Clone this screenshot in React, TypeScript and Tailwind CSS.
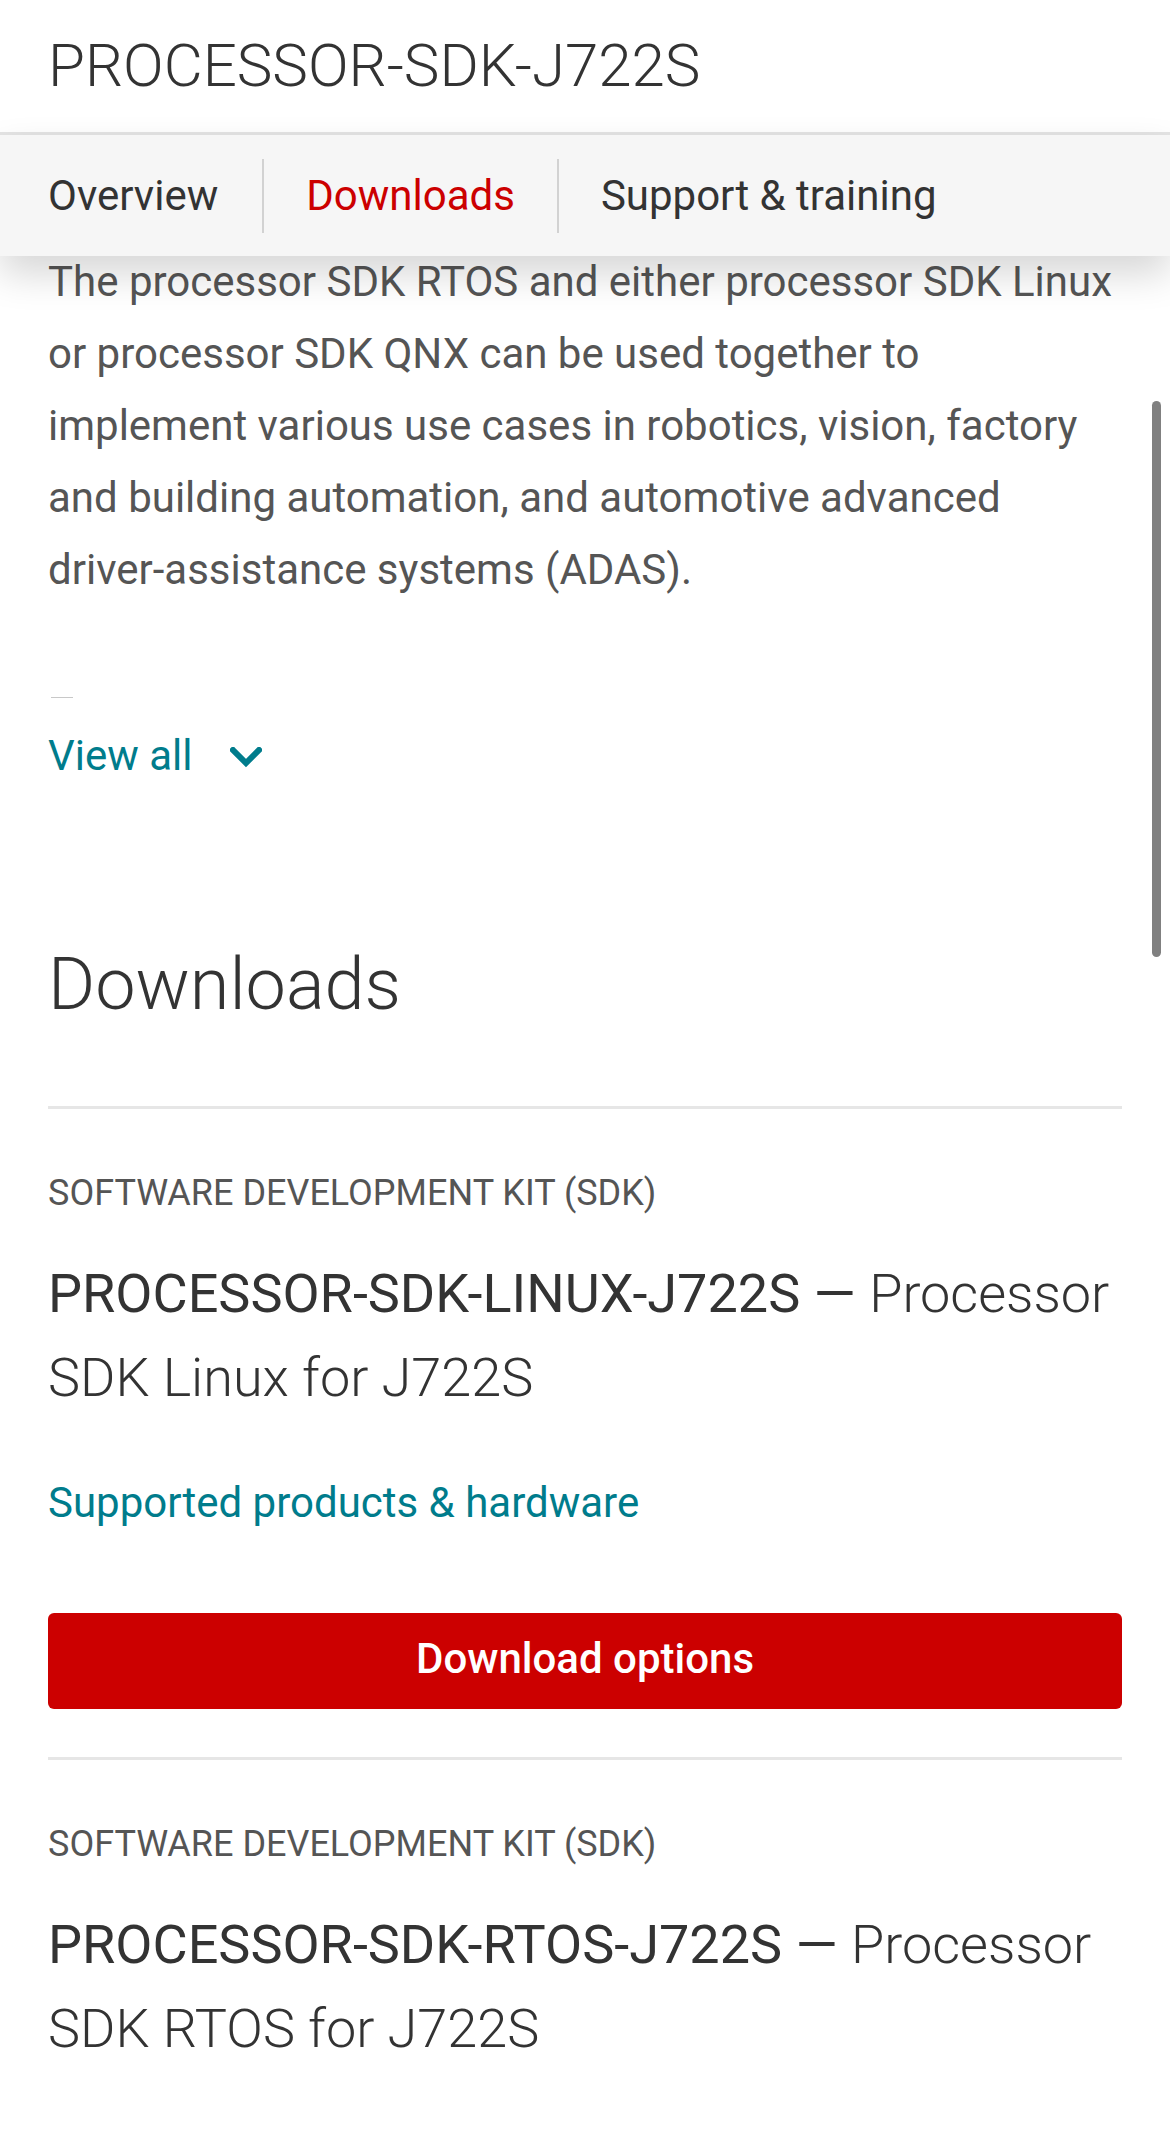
import React from "react";

const font = { fontFamily: 'Roboto, "Noto Sans", "Liberation Sans", sans-serif' };

function SdkItem({ code, name }: { code: string; name: string }) {
  return (
    <div>
      <div className="h-[3px] bg-[#e6e6e6]" />
      <div className="mt-[60px] text-[36px] leading-[48px] text-[#555555] font-normal">
        SOFTWARE DEVELOPMENT KIT (SDK)
      </div>
      <div className="mt-[35px] text-[54px] leading-[84px] text-[#333333]">
        <span className="font-normal">{code} — </span>
        <span className="font-light">{name}</span>
      </div>
    </div>
  );
}

export default function App() {
  return (
    <div className="relative w-[1170px] h-[2129px] overflow-hidden bg-white" style={font}>
      {/* header */}
      <div className="h-[132px] flex items-center px-[48px]">
        <h1 className="text-[60px] leading-[132px] font-light text-[#333333]">PROCESSOR-SDK-J722S</h1>
      </div>
      <div className="h-[3px] bg-[#e4e4e4]" />
      {/* tab bar */}
      <div className="relative z-10 h-[121px] bg-[#f6f6f6] flex items-center shadow-[0_18px_36px_rgba(0,0,0,0.16)]">
        <div className="pl-[48px] pr-[44px] text-[42px] leading-[120px] text-[#333333]">Overview</div>
        <div className="w-[2px] h-[74px] bg-[#d2d2d2]" />
        <div className="px-[42px] text-[42px] leading-[120px] text-[#cc0000]">Downloads</div>
        <div className="w-[2px] h-[74px] bg-[#d2d2d2]" />
        <div className="px-[42px] text-[42px] leading-[120px] text-[#333333]">Support &amp; training</div>
      </div>

      {/* content */}
      <div className="px-[48px] -mt-[10px]">
        <p className="text-[42px] leading-[72px] text-[#555555] font-normal">
          The processor SDK RTOS and either processor SDK Linux or processor SDK QNX can be used together to
          implement various use cases in robotics, vision, factory and building automation, and automotive
          advanced driver-assistance systems (ADAS).
        </p>
        <div className="mt-[91px] ml-[3px] w-[22px] h-[1px] bg-[#c8c8c8]" />
        <div className="mt-[22px] flex items-center text-[42px] leading-[72px] text-[#007c8c]">
          <span>View all</span>
          <svg className="ml-[38px] mt-[4px]" width="32" height="22" viewBox="0 0 32 22" fill="none">
            <path d="M3 3 L16 16 L29 3" stroke="#007c8c" strokeWidth="6" strokeLinecap="square" strokeLinejoin="miter" />
          </svg>
        </div>

        <h2 className="mt-[150px] text-[72px] leading-[86px] font-light text-[#333333]">Downloads</h2>

        <div className="mt-[78px]">
          <SdkItem code="PROCESSOR-SDK-LINUX-J722S" name="Processor SDK Linux for J722S" />
          <div className="mt-[47px] text-[42px] leading-[72px] text-[#007c8c]">Supported products &amp; hardware</div>
          <button className="mt-[74px] w-full h-[96px] rounded-[6px] bg-[#cc0000] text-white text-[42px] font-medium leading-[42px] flex items-center justify-center pb-[4px]">
            Download options
          </button>
          <div className="mt-[48px]">
            <SdkItem code="PROCESSOR-SDK-RTOS-J722S" name="Processor SDK RTOS for J722S" />
          </div>
        </div>
      </div>

      {/* scrollbar overlay */}
      <div className="absolute left-[1152px] top-[401px] w-[9px] h-[556px] rounded-full bg-[#808080]" />
    </div>
  );
}
